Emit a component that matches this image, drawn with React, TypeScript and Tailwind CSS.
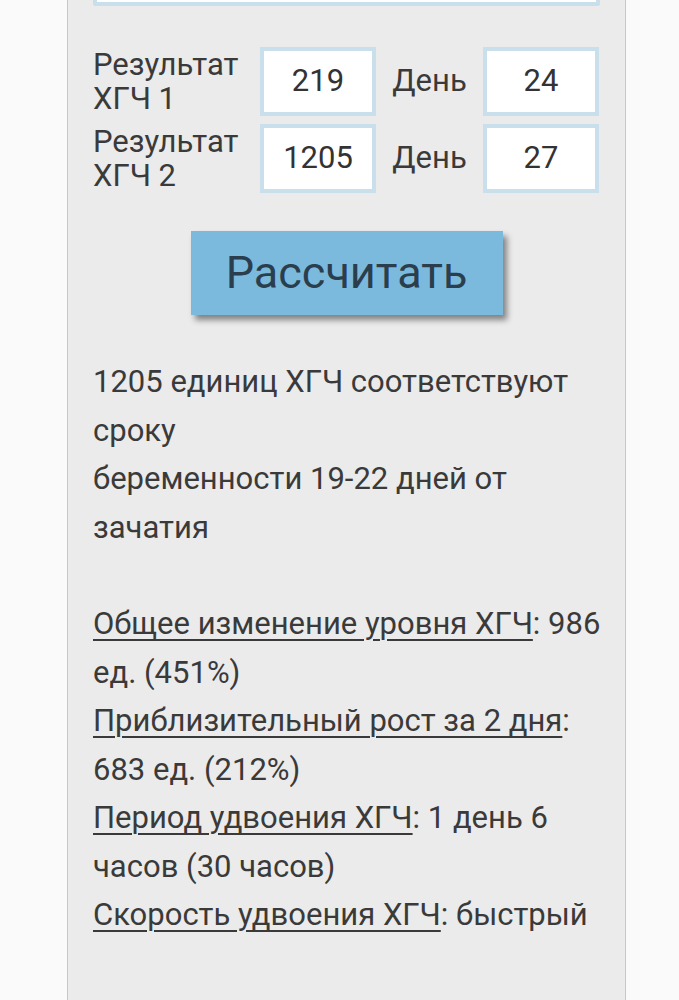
import React from 'react';

const font = { fontFamily: 'Roboto, "Noto Sans", sans-serif' };

const Field: React.FC<{ value: string }> = ({ value }) => (
  <div className="w-[116px] h-[69px] bg-white border-4 border-[#c9e0ec] flex items-center justify-center text-[31px] text-[#333]">
    {value}
  </div>
);

const Row: React.FC<{ n: string; result: string; day: string }> = ({ n, result, day }) => (
  <div className="flex items-center">
    <div className="w-[167px] text-[31px] leading-[34px] text-[#3a3a3a]">
      Результат
      <br />
      ХГЧ {n}
    </div>
    <Field value={result} />
    <div className="w-[107px] text-[31px] text-[#3a3a3a] text-center">День</div>
    <Field value={day} />
  </div>
);

export default function App() {
  return (
    <div className="min-h-[1000px] bg-[#fafafa] overflow-hidden" style={font}>
      <div className="ml-[67px] w-[559px] min-h-[1000px] bg-[#ebebeb] border-x border-[#c8c8c8] pl-[25px] pr-[17px]">
        <div className="mr-[8px] h-[6px] bg-white border-x-4 border-b-4 border-[#c9e0ec] rounded-b-[3px]" />

        <div className="mt-[41px] flex flex-col gap-[8px]">
          <Row n="1" result="219" day="24" />
          <Row n="2" result="1205" day="27" />
        </div>

        <div className="mt-[38px] flex justify-center pr-[8px]">
          <button className="w-[312px] h-[84px] bg-[#7bbadd] text-[#2b3e4d] text-[45px] shadow-[4px_5px_6px_rgba(0,0,0,0.45)]">
            Рассчитать
          </button>
        </div>

        <div className="mt-[43px] text-[31px] leading-[48.5px] text-[#3a3a3a]">
          <p className="pr-[8px]">
            1205 единиц ХГЧ соответствуют сроку
            <br />
            беременности 19-22 дней от зачатия
          </p>
          <p className="h-[48px]"></p>
          <p>
            <span className="underline underline-offset-[5px] decoration-2">Общее изменение уровня ХГЧ</span>: 986 ед. (451%)
          </p>
          <p>
            <span className="underline underline-offset-[5px] decoration-2">Приблизительный рост за 2 дня</span>: 683 ед. (212%)
          </p>
          <p>
            <span className="underline underline-offset-[5px] decoration-2">Период удвоения ХГЧ</span>: 1 день 6 часов (30 часов)
          </p>
          <p>
            <span className="underline underline-offset-[5px] decoration-2">Скорость удвоения ХГЧ</span>: быстрый
          </p>
        </div>
      </div>
    </div>
  );
}
